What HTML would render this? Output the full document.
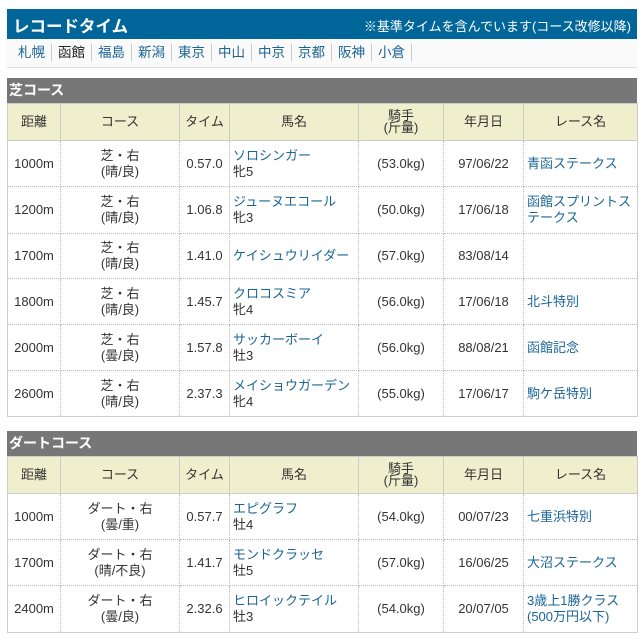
<!DOCTYPE html>
<html><head><meta charset="utf-8"><style>
*{margin:0;padding:0;box-sizing:border-box}
body{width:642px;height:640px;background:#fff;font-family:"Liberation Sans","Noto Sans CJK JP",sans-serif;font-size:13px;color:#333;position:relative;overflow:hidden}
.hd{position:absolute;left:7px;top:9px;width:630px;height:30px;background:#006699;color:#fff}
.hd b{position:absolute;left:6px;top:4px;font-size:16.5px}
.hd span{position:absolute;right:6px;top:7px;font-size:13px}
.tabs{position:absolute;left:7px;top:39px;width:630px;height:29px;background:#fafafa;border-bottom:1px solid #ddd;padding:5px 0 0 5px;font-size:13.5px}
.tabs a{color:#1a6496;text-decoration:none;display:inline-block;padding:0 6px;border-right:1px solid #ccc;line-height:17px}
.tabs a.on{color:#222}
.sec{position:absolute;left:7px;width:630px;height:25px;background:#777;color:#fff;font-weight:bold;font-size:14px;padding:2px 2px}
table{position:absolute;left:7px;width:630px;border-collapse:collapse;table-layout:fixed}
td,th{border:1px solid #ccc;text-align:center;vertical-align:middle;line-height:16px;padding:0}
th{background:#efefce;font-weight:normal;height:37px;border-color:#ccc}
td{border-left:1px dotted #bbb;border-right:1px dotted #bbb;border-top:1px dotted #bbb;border-bottom:1px dotted #bbb}
tr td:first-child{border-left:1px solid #ccc}tr td:last-child{border-right:1px solid #ccc}
tr:last-child td{border-bottom:1px solid #ccc}
td.n,td.r{text-align:left;padding-left:3px}
a.l{color:#1a6496;text-decoration:none}
.jk{line-height:12px}
</style></head><body>
<div class="hd"><b>レコードタイム</b><span>※基準タイムを含んでいます(コース改修以降)</span></div>
<div class="tabs"><a>札幌</a><a class="on">函館</a><a>福島</a><a>新潟</a><a>東京</a><a>中山</a><a>中京</a><a>京都</a><a>阪神</a><a>小倉</a></div>
<div class="sec" style="top:78px">芝コース</div>
<table style="top:103px">
<colgroup><col style="width:53px"><col style="width:119px"><col style="width:50px"><col style="width:129px"><col style="width:85px"><col style="width:80px"><col style="width:114px"></colgroup>
<tr><th>距離</th><th>コース</th><th>タイム</th><th>馬名</th><th class="jk">騎手<br>(斤量)</th><th>年月日</th><th>レース名</th></tr>
<tr style="height:46px"><td>1000m</td><td>芝・右<br>(晴/良)</td><td>0.57.0</td><td class="n"><a class="l">ソロシンガー</a><br>牝5</td><td>(53.0kg)</td><td>97/06/22</td><td class="r"><a class="l">青函ステークス</a></td></tr>
<tr style="height:47px"><td>1200m</td><td>芝・右<br>(晴/良)</td><td>1.06.8</td><td class="n"><a class="l">ジューヌエコール</a><br>牝3</td><td>(50.0kg)</td><td>17/06/18</td><td class="r"><a class="l">函館スプリントステークス</a></td></tr>
<tr style="height:45px"><td>1700m</td><td>芝・右<br>(晴/良)</td><td>1.41.0</td><td class="n"><a class="l">ケイシュウリイダー</a></td><td>(57.0kg)</td><td>83/08/14</td><td class="r"></td></tr>
<tr style="height:46px"><td>1800m</td><td>芝・右<br>(晴/良)</td><td>1.45.7</td><td class="n"><a class="l">クロコスミア</a><br>牝4</td><td>(56.0kg)</td><td>17/06/18</td><td class="r"><a class="l">北斗特別</a></td></tr>
<tr style="height:46px"><td>2000m</td><td>芝・右<br>(曇/良)</td><td>1.57.8</td><td class="n"><a class="l">サッカーボーイ</a><br>牡3</td><td>(56.0kg)</td><td>88/08/21</td><td class="r"><a class="l">函館記念</a></td></tr>
<tr style="height:46px"><td>2600m</td><td>芝・右<br>(晴/良)</td><td>2.37.3</td><td class="n"><a class="l">メイショウガーデン</a><br>牝4</td><td>(55.0kg)</td><td>17/06/17</td><td class="r"><a class="l">駒ケ岳特別</a></td></tr>
</table>
<div class="sec" style="top:431px">ダートコース</div>
<table style="top:456px">
<colgroup><col style="width:53px"><col style="width:119px"><col style="width:50px"><col style="width:129px"><col style="width:85px"><col style="width:80px"><col style="width:114px"></colgroup>
<tr><th>距離</th><th>コース</th><th>タイム</th><th>馬名</th><th class="jk">騎手<br>(斤量)</th><th>年月日</th><th>レース名</th></tr>
<tr style="height:46px"><td>1000m</td><td>ダート・右<br>(曇/重)</td><td>0.57.7</td><td class="n"><a class="l">エピグラフ</a><br>牡4</td><td>(54.0kg)</td><td>00/07/23</td><td class="r"><a class="l">七重浜特別</a></td></tr>
<tr style="height:46px"><td>1700m</td><td>ダート・右<br>(晴/不良)</td><td>1.41.7</td><td class="n"><a class="l">モンドクラッセ</a><br>牡5</td><td>(57.0kg)</td><td>16/06/25</td><td class="r"><a class="l">大沼ステークス</a></td></tr>
<tr style="height:47px"><td>2400m</td><td>ダート・右<br>(曇/良)</td><td>2.32.6</td><td class="n"><a class="l">ヒロイックテイル</a><br>牡3</td><td>(54.0kg)</td><td>20/07/05</td><td class="r"><a class="l">3歳上1勝クラス(500万円以下)</a></td></tr>
</table>
</body></html>
